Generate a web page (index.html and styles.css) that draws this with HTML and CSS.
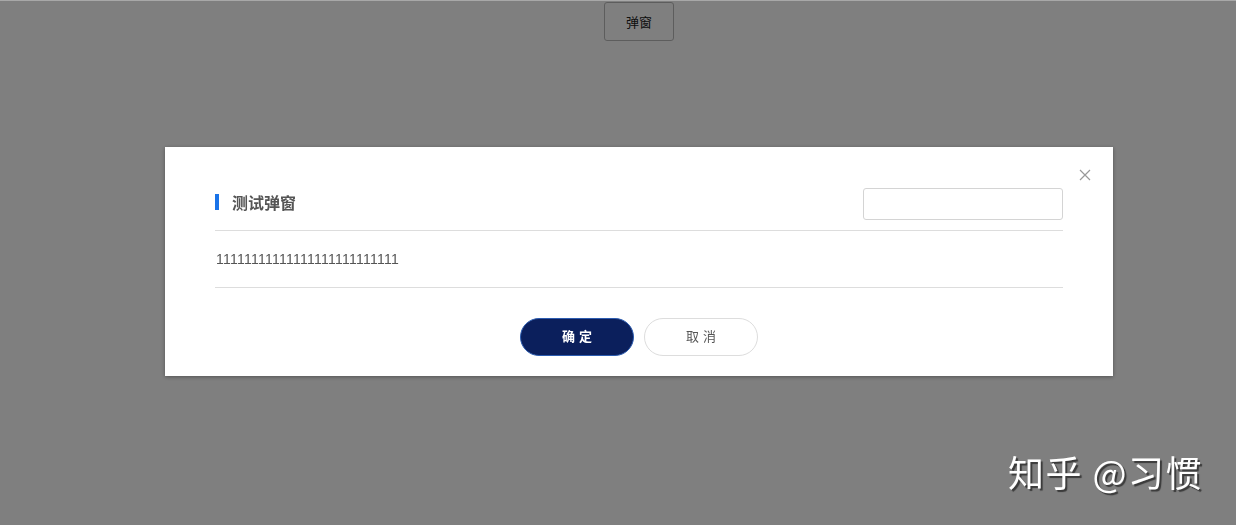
FILE: index.html
```html
<!DOCTYPE html>
<html lang="zh-CN">
<head>
    <meta charset="UTF-8">
    <title>弹窗</title>
    <link rel="stylesheet" href="styles.css">
</head>
<body>
    <div class="page">
        <button class="open-btn">弹窗</button>
    </div>

    <!-- 遮罩层 + 弹窗 -->
    <div class="mask">
        <div class="dialog">
            <span class="close-btn">
                <svg width="12" height="12" viewBox="0 0 12 12">
                    <path d="M1 1 L11 11 M11 1 L1 11" stroke="#999" stroke-width="1.2" fill="none"/>
                </svg>
            </span>
            <div class="dialog-header">
                <h3 class="dialog-title">测试弹窗</h3>
                <input type="text" class="dialog-input">
            </div>
            <div class="dialog-body">11111111111111111111111111</div>
            <div class="dialog-footer">
                <button class="btn btn-primary">确定</button>
                <button class="btn btn-default">取消</button>
            </div>
        </div>
    </div>

    <div class="watermark">知乎 @习惯</div>
</body>
</html>
```

FILE: styles.css
```css
/* 全体 */
body {
    margin: 0;
    background-color: #fff;
    font-family: "Liberation Sans", "Noto Sans CJK SC", sans-serif;
    color: #555;
}

.page {
    padding: 2px 0 0 42px;
    text-align: center;
}

.open-btn {
    width: 70px;
    height: 39px;
    background-color: #fff;
    border: 1px solid #bbb;
    border-radius: 3px;
    font-family: "Noto Sans CJK SC", sans-serif;
    font-size: 13px;
    color: #222;
}

/* 遮罩 */
.mask {
    position: fixed;
    inset: 0;
    background-color: rgba(0, 0, 0, 0.5);
    border-top: 1px solid #a8a8a8;
    display: flex;
    align-items: flex-start;
    padding: 146px 0 0 165px;
}

/* 弹窗 */
.dialog {
    position: relative;
    width: 948px;
    box-sizing: border-box;
    padding: 0 50px 20px 50px;
    background-color: #fff;
    box-shadow: 0 1px 4px rgba(0, 0, 0, 0.35);
}

.close-btn {
    position: absolute;
    top: 22px;
    right: 22px;
    width: 12px;
    height: 12px;
    line-height: 0;
}

.dialog-header {
    display: flex;
    justify-content: space-between;
    align-items: center;
    padding: 41px 0 10px;
    border-bottom: 1px solid #ddd;
}

.dialog-title {
    margin: 0 0 4px;
    padding-left: 13px;
    border-left: 4px solid #1a73e8;
    line-height: 16px;
    font-family: "Noto Sans CJK SC", sans-serif;
    font-size: 16px;
    font-weight: bold;
    color: #555;
}

.dialog-input {
    width: 200px;
    height: 32px;
    box-sizing: border-box;
    border: 1px solid #d4d4d4;
    border-radius: 3px;
    margin: 0;
}

.dialog-body {
    line-height: 56px;
    padding-left: 1px;
    font-family: "Liberation Sans", Arial, sans-serif;
    font-size: 14px;
    letter-spacing: 0.25px;
    color: #555;
    border-bottom: 1px solid #ddd;
}

.dialog-footer {
    display: flex;
    justify-content: center;
    gap: 10px;
    padding-top: 30px;
}

.btn {
    width: 114px;
    height: 38px;
    border-radius: 19px;
    font-family: "Noto Sans CJK SC", sans-serif;
    font-size: 13px;
    line-height: 34px;
    letter-spacing: 4px;
    padding: 0 6px 2px 10px;
}

.btn-primary {
    background-color: #0b1f5c;
    border: 1px solid #2c5cb0;
    color: #fff;
    font-weight: bold;
}

.btn-default {
    background-color: #fff;
    border: 1px solid #ddd;
    color: #555;
}

/* 水印 */
.watermark {
    position: fixed;
    left: 1008px;
    top: 445px;
    font-family: "Noto Sans CJK SC", sans-serif;
    font-size: 36px;
    letter-spacing: 1.5px;
    color: #fff;
    text-shadow: 2px 2px 1px #3a3a3a;
}
```
